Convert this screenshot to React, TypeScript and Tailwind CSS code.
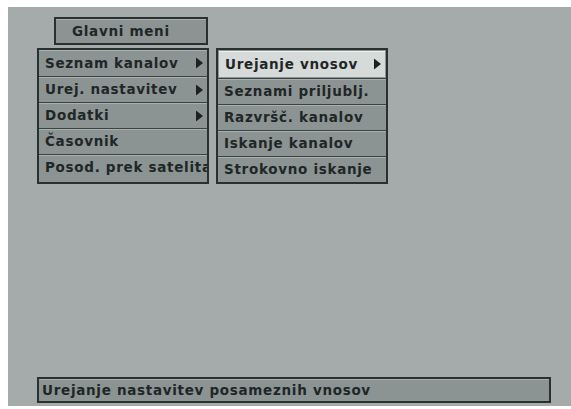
import React from "react";

const leftItems = [
  { label: "Seznam kanalov", arrow: true },
  { label: "Urej. nastavitev", arrow: true },
  { label: "Dodatki", arrow: true },
  { label: "Časovnik", arrow: false },
  { label: "Posod. prek satelita", arrow: false },
];

const rightItems = [
  { label: "Urejanje vnosov", arrow: true },
  { label: "Seznami priljublj.", arrow: false },
  { label: "Razvršč. kanalov", arrow: false },
  { label: "Iskanje kanalov", arrow: false },
  { label: "Strokovno iskanje", arrow: false },
];

const font = { fontFamily: '"DejaVu Sans", Verdana, sans-serif' };

function Arrow() {
  return (
    <svg width="7" height="11" viewBox="0 0 7 11" className="shrink-0">
      <path d="M0 0 L7 5.5 L0 11 Z" fill="#1c2222" />
    </svg>
  );
}

type Item = { label: string; arrow: boolean };

function Menu({ items, active }: { items: Item[]; active?: number }) {
  return (
    <div className="flex w-[172px] flex-col overflow-hidden border-2 border-[#283030] bg-[#8c9393]">
      {items.map((item, i) => (
        <div
          key={item.label}
          className={
            "relative flex h-[26px] items-center overflow-hidden whitespace-nowrap pl-[6px] " +
            (i > 0 ? "border-t border-[#3a4242] " : "") +
            (i === active
              ? "m-[1px] bg-[#d6dbda] shadow-[inset_0_1px_0_#eef1f0]"
              : "shadow-[inset_0_1px_0_#a9b0af]")
          }
        >
          <span className="text-[13.5px] font-bold tracking-[0.7px] text-[#1f2626]">
            {item.label}
          </span>
          {item.arrow && (
            <span className="absolute right-[4px] top-1/2 flex -translate-y-1/2">
              <Arrow />
            </span>
          )}
        </div>
      ))}
    </div>
  );
}

export default function App() {
  return (
    <div className="h-[409px] w-[571px] bg-white pl-[8px] pt-[7px]" style={font}>
      <div className="flex h-[399px] w-[563px] flex-col bg-[#a5abaa] pl-[29px] pt-[10px]">
        <div className="ml-[17px] flex h-[28px] w-[154px] items-center border-2 border-[#283030] bg-[#8c9393] pl-[16px] shadow-[inset_0_1px_0_#a9b0af]">
          <span className="text-[13.5px] font-bold tracking-[0.7px] text-[#1f2626]">
            Glavni meni
          </span>
        </div>
        <div className="mt-[3px] flex gap-[7px]">
          <Menu items={leftItems} />
          <Menu items={rightItems} active={0} />
        </div>
        <div className="mb-[3px] mt-auto flex h-[26px] w-[514px] items-center border-2 border-[#283030] bg-[#8c9393] pl-[3px] shadow-[inset_0_1px_0_#a9b0af]">
          <span className="whitespace-nowrap text-[13.5px] font-bold tracking-[0.7px] text-[#1f2626]">
            Urejanje nastavitev posameznih vnosov
          </span>
        </div>
      </div>
    </div>
  );
}
